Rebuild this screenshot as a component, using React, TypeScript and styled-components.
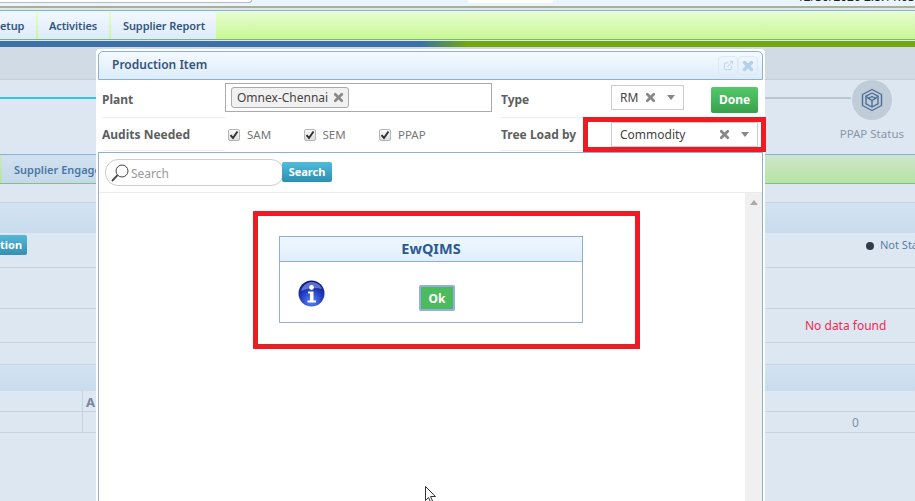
import React from 'react'
import styled, { createGlobalStyle } from 'styled-components'
import { X, ExternalLink } from 'lucide-react'

const FONT = `'Noto Sans', 'Liberation Sans', sans-serif`

const GlobalStyle = createGlobalStyle`
  html, body {
    margin: 0;
    padding: 0;
    background: #dde7f1;
    font-family: ${FONT};
  }
  * {
    box-sizing: border-box;
  }
`

const Page = styled.div`
  position: relative;
  width: 915px;
  height: 501px;
  overflow: hidden;
  display: flex;
  flex-direction: column;
  background: #dde7f1;
`

const TopStrip = styled.div`
  height: 6px;
  flex: none;
  display: flex;
  align-items: flex-start;
  background: #e9f4fe;
  overflow: hidden;
`

const TopInput = styled.div`
  width: 252px;
  height: 3px;
  flex: none;
  background: #fff;
  border-right: 1px solid #b9b9b9;
  border-bottom: 1px solid #b9b9b9;
  border-bottom-right-radius: 3px;
`

const TopBlock = styled.div`
  width: 85px;
  height: 3px;
  flex: none;
  margin-left: 216px;
  background: #fff;
`

const TopDate = styled.div`
  flex: none;
  margin: -9px 0 0 244px;
  font-size: 12px;
  line-height: 12px;
  white-space: nowrap;
  color: #222;

  span {
    color: #c8841c;
  }
`

const OliveLine = styled.div`
  height: 2px;
  flex: none;
  background: #a9b18d;
`

const TabBar = styled.div`
  height: 30px;
  flex: none;
  margin-top: 2px;
  display: flex;
  gap: 2px;
  align-items: stretch;
  padding-top: 1px;
  border-top: 1px solid #8fb0d6;
  border-bottom: 1px solid #7fb46c;
  background: linear-gradient(#e8fcd3, #c8f894);
`

const MenuTab = styled.div<{ $width: number; $indent: number }>`
  width: ${(p) => p.$width}px;
  text-indent: ${(p) => p.$indent}px;
  display: flex;
  align-items: center;
  white-space: nowrap;
  overflow: hidden;
  font-size: 11px;
  font-weight: 600;
  letter-spacing: -0.1px;
  color: #33557f;
  background: linear-gradient(#f2f8fe, #dcebfa);
  border-radius: 3px 3px 0 0;
`

const Stripe = styled.div`
  height: 6px;
  flex: none;
  margin-top: 1px;
  background: linear-gradient(to right, #3c70a7 0, #3c70a7 46%, #6fa90d 51%, #6fa90d 100%);
`

const Breadcrumb = styled.div`
  height: 33px;
  flex: none;
  background: #d1dbe5;
  border-bottom: 1px solid #c4d0dc;
`

const StepArea = styled.div`
  height: 74px;
  flex: none;
  display: flex;
  justify-content: space-between;
`

const StepLine = styled.div`
  width: 96px;
  height: 2px;
  margin-top: 17px;
  background: #2fc4ee;
`

const StepEnd = styled.div`
  position: relative;
  width: 155px;
  display: flex;
  flex-direction: column;
  align-items: flex-end;
  padding-right: 11px;

  &::before {
    content: '';
    position: absolute;
    left: 0;
    right: 64px;
    top: 17px;
    height: 2px;
    background: #b9c5d1;
  }
`

const StepCircle = styled.div`
  width: 40px;
  height: 40px;
  margin: 0 12px 0 0;
  border-radius: 50%;
  background: #c0ccd8;
  display: flex;
  align-items: center;
  justify-content: center;
`

const StepLabel = styled.div`
  margin-top: 6px;
  font-size: 11.5px;
  line-height: 16px;
  color: #8796a8;
  white-space: nowrap;
`

const SubTabs = styled.div`
  height: 30px;
  flex: none;
  display: flex;
  border-top: 1px solid #8fb0d6;
  border-bottom: 1px solid #83c183;
  background: linear-gradient(#cce6cc, #b7e4a3);
`

const SubTab = styled.div`
  width: 140px;
  margin-left: 2px;
  padding-left: 12px;
  display: flex;
  align-items: center;
  font-size: 11px;
  font-weight: 600;
  color: #4a76a6;
  white-space: nowrap;
  background: linear-gradient(#d1e1ef, #c5d9ea);
`

const Gap = styled.div<{ $h: number }>`
  height: ${(p) => p.$h}px;
  flex: none;
`

const Band = styled.div<{ $h: number }>`
  height: ${(p) => p.$h}px;
  flex: none;
  border-top: 1px solid #c8d4e0;
  background: linear-gradient(#d3e3f1, #c8dcee);
`

const Row = styled.div<{ $h: number }>`
  position: relative;
  height: ${(p) => p.$h}px;
  flex: none;
  border-bottom: 1px solid #c8d3df;
  font-size: 12px;
  color: #7b8ea3;
`

const ActionButton = styled.div`
  position: absolute;
  left: 0;
  top: 2px;
  width: 27px;
  height: 20px;
  border-radius: 0 2px 2px 0;
  background: linear-gradient(#55b7d6, #3490b3);
  color: #fff;
  font-size: 11px;
  font-weight: 700;
  line-height: 20px;
  text-align: right;
  padding-right: 5px;
  overflow: hidden;
`

const StatusDot = styled.span`
  position: absolute;
  left: 866px;
  top: 9px;
  width: 8px;
  height: 8px;
  border-radius: 50%;
  background: #333a48;
`

const StatusText = styled.span`
  position: absolute;
  left: 880px;
  top: 4px;
  font-size: 11px;
  line-height: 16px;
  color: #5b7ea5;
  white-space: nowrap;
`

const NoData = styled.span`
  position: absolute;
  left: 805px;
  top: 8px;
  font-size: 12px;
  color: #ee2a55;
  white-space: nowrap;
`

const ColumnCell = styled.span`
  position: absolute;
  left: 82px;
  top: 0;
  bottom: 0;
  width: 14px;
  padding-left: 3px;
  border-left: 1px solid #c8d3df;
  font-size: 13px;
  font-weight: 700;
  line-height: 22px;
  color: #76889c;
`

const ZeroCell = styled.span`
  position: absolute;
  left: 852px;
  top: 2px;
  font-size: 12px;
  color: #7b8ea3;
`

/* modal */

const Modal = styled.div`
  position: absolute;
  left: 96px;
  top: 49px;
  width: 669px;
  height: 470px;
  padding: 2px 2px 0;
  background: #fff;
  border-radius: 4px 4px 0 0;
  display: flex;
  flex-direction: column;
`

const ModalHeader = styled.div`
  height: 29px;
  flex: none;
  display: flex;
  align-items: center;
  padding: 0 4px 0 13px;
  border: 1px solid #8fb0d6;
  border-radius: 5px 5px 0 0;
  background: linear-gradient(#f4faff, #dcecfb);
`

const ModalTitle = styled.div`
  flex: 1;
  padding-bottom: 2px;
  font-size: 12px;
  font-weight: 600;
  color: #34557d;
`

const HeaderIcon = styled.div`
  width: 20px;
  height: 19px;
  display: flex;
  align-items: center;
  justify-content: center;
  border: 1px solid #dde9f4;
  border-radius: 4px;
  color: #b4d0ea;
`

const FormGrid = styled.div`
  flex: none;
  display: grid;
  grid-template-columns: 123px 276px 110px 1fr;
  grid-template-rows: 38px 33px;
  padding: 0 0 1px 4px;
`

const FieldLabel = styled.div<{ $drop?: number }>`
  display: flex;
  align-items: center;
  padding-top: ${(p) => p.$drop ?? 0}px;
  border-bottom: 1px solid #eeeeee;
  font-size: 12px;
  font-weight: 700;
  color: #5e5e5e;
  white-space: nowrap;
`

const Field = styled.div<{ $lift?: number }>`
  display: flex;
  align-items: center;
  padding-bottom: ${(p) => p.$lift ?? 0}px;
`

const PlantInput = styled.div`
  width: 267px;
  height: 29px;
  padding-left: 5px;
  display: flex;
  align-items: center;
  border: 1px solid #aaa;
`

const Tag = styled.div`
  height: 21px;
  display: flex;
  align-items: center;
  gap: 4px;
  padding: 0 3px 0 5px;
  border: 1px solid #aaa;
  border-radius: 3px;
  background: #f1f1f1;
  font-size: 12px;
  color: #444;
  white-space: nowrap;
`

const ClearIcon = styled(X).attrs({ size: 13, strokeWidth: 5 })`
  color: #888;
  flex: none;
`

const Select = styled.div<{ $width: number }>`
  width: ${(p) => p.$width}px;
  height: 25px;
  flex: none;
  display: flex;
  align-items: center;
  padding: 0 8px 0 8px;
  border: 1px solid #ccc;
  font-size: 12px;
  color: #444;

  span {
    flex: 1;
  }
`

const Caret = styled.i`
  width: 0;
  height: 0;
  margin-left: 10px;
  border-left: 4px solid transparent;
  border-right: 4px solid transparent;
  border-top: 5px solid #888;
`

const DoneButton = styled.div`
  width: 47px;
  height: 26px;
  margin-left: 27px;
  margin-top: 5px;
  border-radius: 2px;
  background: linear-gradient(#54c96a, #37a14b);
  color: #fff;
  font-size: 12px;
  font-weight: 700;
  line-height: 26px;
  text-align: center;
`

const AuditGroup = styled.div`
  display: flex;
  align-items: center;
  margin-left: 3px;
`

const Audit = styled.label`
  width: 75.5px;
  display: flex;
  align-items: center;
  gap: 7px;
  font-size: 11.5px;
  color: #777;
`

const CheckBox = styled.span`
  width: 12px;
  height: 12px;
  display: flex;
  align-items: center;
  justify-content: center;
  border: 1px solid #b5b5b5;
  border-radius: 2px;
  background: linear-gradient(#fafafa, #dedede);
`

const TreePanel = styled.div`
  position: relative;
  flex: 1;
  display: flex;
  flex-direction: column;
  border: 1px solid #8fb0d6;
`

const SearchRow = styled.div`
  height: 40px;
  flex: none;
  display: flex;
  align-items: flex-start;
  padding: 6px 0 0 6px;
  border-bottom: 1px solid #ebebeb;
`

const SearchBox = styled.div`
  width: 179px;
  height: 27px;
  display: flex;
  align-items: center;
  gap: 1px;
  padding: 1px 0 0 4px;
  border: 1px solid #ccc;
  border-radius: 13px;
  font-size: 12px;
  color: #999;
`

const SearchButton = styled.div`
  width: 50px;
  height: 20px;
  margin: 3px 0 0 -2px;
  border-radius: 2px;
  background: linear-gradient(#4fbcdb, #2d8fb0);
  color: #fff;
  font-size: 11px;
  font-weight: 700;
  line-height: 20px;
  text-align: center;
`

const TreeBody = styled.div`
  flex: 1;
  display: flex;
`

const TreeContent = styled.div`
  flex: 1;
  padding: 43px 0 0 180px;
`

const ScrollTrack = styled.div`
  width: 17px;
  flex: none;
  padding-top: 7px;
  background: #f0f0f0;
  display: flex;
  justify-content: center;
  align-items: flex-start;

  i {
    width: 0;
    height: 0;
    border-left: 4px solid transparent;
    border-right: 4px solid transparent;
    border-bottom: 5px solid #aaa;
  }
`

const Dialog = styled.div`
  width: 304px;
  height: 87px;
  border: 1px solid #8fb0d6;
`

const DialogTitle = styled.div`
  height: 25px;
  border-bottom: 1px solid #8fb0d6;
  background: linear-gradient(#eef7ff, #e0effc);
  font-size: 14.5px;
  font-weight: 700;
  line-height: 23px;
  text-align: center;
  color: #2f5a8f;
`

const DialogBody = styled.div`
  display: flex;
  align-items: flex-start;
  padding: 18px 0 0 18px;
`

const OkButton = styled.div`
  width: 36px;
  height: 26px;
  margin: 5px 0 0 94px;
  border: 2px solid #93aee6;
  border-radius: 2px;
  background: #4cbb5c;
  color: #fff;
  font-size: 12px;
  font-weight: 700;
  line-height: 23px;
  text-align: center;
`

const RedBox = styled.div<{ $left: number; $top: number; $width: number; $height: number }>`
  position: absolute;
  left: ${(p) => p.$left}px;
  top: ${(p) => p.$top}px;
  width: ${(p) => p.$width}px;
  height: ${(p) => p.$height}px;
  border: 5px solid #ed1c24;
  pointer-events: none;
`

const Cursor = styled.svg`
  position: absolute;
  left: 425px;
  top: 486px;
`

const BoxIcon = () => (
  <svg width="24" height="24" viewBox="0 0 24 24" fill="none" stroke="#4f6f97" strokeWidth="1.4" strokeLinejoin="round">
    <path d="M12 1.5 21.5 6.5v11L12 22.500 2.500 17.500v-11z" />
    <path d="M12 5 18 8.200v7.600L12 19l-6-3.200V8.200z" />
    <path d="M12 8.500 15.500 10.400 12 12.500 8.500 10.400zM12 12.500V19M15.500 10.400l2.500-2.200M8.500 10.400 6 8.200" />
  </svg>
)

const SearchGlass = () => (
  <svg width="20" height="20" viewBox="0 0 20 20" fill="none" stroke="#444">
    <circle cx="12" cy="8" r="6" strokeWidth="1" />
    <path d="M7.600 12.200 2 18" strokeWidth="1.800" />
  </svg>
)

const Tick = () => (
  <svg width="10" height="10" viewBox="0 0 10 10" fill="none" stroke="#333" strokeWidth="2">
    <path d="M1.500 5.200 4 8l4.500-6.500" />
  </svg>
)

const InfoIcon = () => (
  <svg width="27" height="27" viewBox="0 0 27 27">
    <defs>
      <radialGradient id="infoFill" cx="50%" cy="80%" r="75%">
        <stop offset="0%" stopColor="#5f86f0" />
        <stop offset="55%" stopColor="#2440c4" />
        <stop offset="100%" stopColor="#0c1680" />
      </radialGradient>
    </defs>
    <circle cx="13.500" cy="13.500" r="13" fill="url(#infoFill)" />
    <path d="M3 11C5 4 10 2 14 2c4 0 8 2 10 7-6-2-14-1-21 2z" fill="#8ea6f0" opacity="0.6" />
    <circle cx="13.500" cy="7.500" r="2.400" fill="#fff" />
    <path d="M10 11.500h5.500v9H18v2H9.500v-2H12v-7h-2z" fill="#fff" />
  </svg>
)

const App = () => (
  <>
    <GlobalStyle />
    <Page>
      <TopStrip>
        <TopInput />
        <TopBlock />
        <TopDate>
          12/30/2020 2:8:11:03 <span>PM</span>
        </TopDate>
      </TopStrip>
      <OliveLine />
      <TabBar>
        <MenuTab $width={36} $indent={-6}>Setup</MenuTab>
        <MenuTab $width={71} $indent={11}>Activities</MenuTab>
        <MenuTab $width={105} $indent={12}>Supplier Report</MenuTab>
      </TabBar>
      <Stripe />
      <Breadcrumb />
      <StepArea>
        <StepLine />
        <StepEnd>
          <StepCircle>
            <BoxIcon />
          </StepCircle>
          <StepLabel>PPAP Status</StepLabel>
        </StepEnd>
      </StepArea>
      <SubTabs>
        <SubTab>Supplier Engagement</SubTab>
      </SubTabs>
      <Gap $h={18} />
      <Band $h={31} />
      <Row $h={35}>
        <ActionButton>tion</ActionButton>
        <StatusDot />
        <StatusText>Not Started</StatusText>
      </Row>
      <Row $h={41} />
      <Row $h={34}>
        <NoData>No data found</NoData>
      </Row>
      <Gap $h={21} />
      <Band $h={27} />
      <Row $h={21}>
        <ColumnCell>A</ColumnCell>
      </Row>
      <Row $h={21}>
        <ColumnCell />
        <ZeroCell>0</ZeroCell>
      </Row>

      <Modal>
        <ModalHeader>
          <ModalTitle>Production Item</ModalTitle>
          <HeaderIcon>
            <ExternalLink size={11} />
          </HeaderIcon>
          <HeaderIcon>
            <X size={14} strokeWidth={6} />
          </HeaderIcon>
        </ModalHeader>
        <FormGrid>
          <FieldLabel $drop={2}>Plant</FieldLabel>
          <Field $lift={3}>
            <PlantInput>
              <Tag>
                Omnex-Chennai
                <ClearIcon />
              </Tag>
            </PlantInput>
          </Field>
          <FieldLabel $drop={2}>Type</FieldLabel>
          <Field $lift={3}>
            <Select $width={73}>
              <span>RM</span>
              <ClearIcon />
              <Caret />
            </Select>
            <DoneButton>Done</DoneButton>
          </Field>
          <FieldLabel>Audits Needed</FieldLabel>
          <Field>
            <AuditGroup>
              <Audit>
                <CheckBox><Tick /></CheckBox>
                SAM
              </Audit>
              <Audit>
                <CheckBox><Tick /></CheckBox>
                SEM
              </Audit>
              <Audit>
                <CheckBox><Tick /></CheckBox>
                PPAP
              </Audit>
            </AuditGroup>
          </Field>
          <FieldLabel>Tree Load by</FieldLabel>
          <Field>
            <Select $width={147}>
              <span>Commodity</span>
              <ClearIcon />
              <Caret />
            </Select>
          </Field>
        </FormGrid>
        <TreePanel>
          <SearchRow>
            <SearchBox>
              <SearchGlass />
              Search
            </SearchBox>
            <SearchButton>Search</SearchButton>
          </SearchRow>
          <TreeBody>
            <TreeContent>
              <Dialog>
                <DialogTitle>EwQIMS</DialogTitle>
                <DialogBody>
                  <InfoIcon />
                  <OkButton>Ok</OkButton>
                </DialogBody>
              </Dialog>
            </TreeContent>
            <ScrollTrack>
              <i />
            </ScrollTrack>
          </TreeBody>
        </TreePanel>
      </Modal>

      <RedBox $left={583} $top={117} $width={183} $height={35} />
      <RedBox $left={253} $top={211} $width={387} $height={138} />
      <Cursor width="14" height="16" viewBox="0 0 14 16" fill="#fff" stroke="#333">
        <path d="M.5.5v14l3-3 2 4.500 2-1-2-4.500h5z" />
      </Cursor>
    </Page>
  </>
)

export default App
